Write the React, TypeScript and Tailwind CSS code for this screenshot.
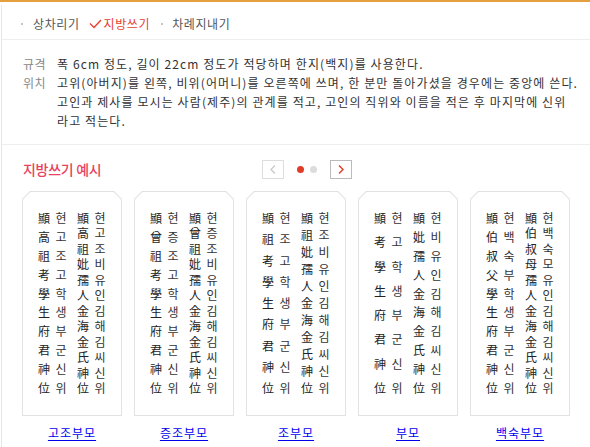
import React from 'react';

type Pair = { hanja: string; hangul: string };

type Jibang = {
  name: string;
  father: Pair;
  mother: Pair;
};

// Each tablet: left column is the father's line, right is the mother's.
const JIBANG: Jibang[] = [
  {
    name: '고조부모',
    father: { hanja: '顯高祖考學生府君神位', hangul: '현고조고학생부군신위' },
    mother: { hanja: '顯高祖妣孺人金海金氏神位', hangul: '현고조비유인김해김씨신위' },
  },
  {
    name: '증조부모',
    father: { hanja: '顯曾祖考學生府君神位', hangul: '현증조고학생부군신위' },
    mother: { hanja: '顯曾祖妣孺人金海金氏神位', hangul: '현증조비유인김해김씨신위' },
  },
  {
    name: '조부모',
    father: { hanja: '顯祖考學生府君神位', hangul: '현조고학생부군신위' },
    mother: { hanja: '顯祖妣孺人金海金氏神位', hangul: '현조비유인김해김씨신위' },
  },
  {
    name: '부모',
    father: { hanja: '顯考學生府君神位', hangul: '현고학생부군신위' },
    mother: { hanja: '顯妣孺人金海金氏神位', hangul: '현비유인김해김씨신위' },
  },
  {
    name: '백숙부모',
    father: { hanja: '顯伯叔父學生府君神位', hangul: '현백숙부학생부군신위' },
    mother: { hanja: '顯伯叔母孺人金海金氏神位', hangul: '현백숙모유인김해김씨신위' },
  },
];

const Column: React.FC<{ pair: Pair }> = ({ pair }) => {
  const hanja = Array.from(pair.hanja);
  const hangul = Array.from(pair.hangul);
  return (
    <div className="flex h-[182px] flex-col justify-between">
      {hanja.map((ch, i) => (
        <div key={i} className="flex h-[12px] gap-[5px] text-[12px] leading-[12px]">
          <span className="w-[12px] text-center text-[#222]">{ch}</span>
          <span className="w-[12px] text-center text-[#333]">{hangul[i]}</span>
        </div>
      ))}
    </div>
  );
};

const Tablet: React.FC<{ item: Jibang }> = ({ item }) => (
  <div className="flex w-[100px] flex-col items-center">
    <div className="h-[225px] w-full bg-[#e2e2e2] p-px [clip-path:polygon(8px_0,calc(100%-8px)_0,100%_8px,100%_100%,0_100%,0_8px)]">
      <div className="flex h-full w-full justify-center gap-[10px] bg-white pt-[20px] [clip-path:polygon(7.5px_0,calc(100%-7.5px)_0,100%_7.5px,100%_100%,0_100%,0_7.5px)]">
        <Column pair={item.father} />
        <Column pair={item.mother} />
      </div>
    </div>
    <a className="mt-[9px] text-[12px] leading-[16px] tracking-[1px] text-[#0000ee] underline underline-offset-2">{item.name}</a>
  </div>
);

const Bullet = () => <span className="block h-[2px] w-[2px] bg-[#c8c8c8]" />;

export default function App() {
  return (
    <div className="h-[447px] w-[590px] overflow-hidden bg-white font-['Noto_Sans_CJK_KR',sans-serif] text-[#333]">
      <div className="h-[2px] bg-[#e3a03c]" />
      <div className="mt-[3px] ml-px h-full border-l border-[#e6e6e6]">
        {/* tab menu */}
        <div className="flex h-[35px] items-center border-b border-[#eeeeee] pt-[3px] pl-[19px] text-[12px] tracking-[0.6px] text-[#555]">
          <Bullet />
          <span className="ml-[10px]">상차리기</span>
          <span className="ml-[9px] flex items-center text-[#e6412f]">
            <svg width="13" height="10" viewBox="0 0 13 10" fill="none" stroke="currentColor" strokeWidth="1.4">
              <polyline points="1,4.5 5,8.5 12,1" />
            </svg>
            <span className="ml-[2px]">지방쓰기</span>
          </span>
          <span className="ml-[11px]"><Bullet /></span>
          <span className="ml-[9px]">차례지내기</span>
        </div>

        {/* spec text */}
        <div className="border-b border-[#eeeeee] px-[21px] pt-[14px] pb-[14px] text-[12px] leading-[19px] tracking-[1.1px]">
          <div className="flex">
            <span className="w-[34px] shrink-0 tracking-[0.5px] text-[#888]">규격</span>
            <span>폭 6cm 정도, 길이 22cm 정도가 적당하며 한지(백지)를 사용한다.</span>
          </div>
          <div className="flex">
            <span className="w-[34px] shrink-0 tracking-[0.5px] text-[#888]">위치</span>
            <span className="whitespace-nowrap">
              고위(아버지)를 왼쪽, 비위(어머니)를 오른쪽에 쓰며, 한 분만 돌아가셨을 경우에는 중앙에 쓴다.
              <br />
              고인과 제사를 모시는 사람(제주)의 관계를 적고, 고인의 직위와 이름을 적은 후 마지막에 신위
              <br />
              라고 적는다.
            </span>
          </div>
        </div>

        {/* examples header with pager */}
        <div className="mt-[15px] grid grid-cols-[1fr_auto_1fr] items-center pl-[21px]">
          <h2 className="text-[14px] leading-[19px] font-medium tracking-[-0.3px] text-[#e8435e]">지방쓰기 예시</h2>
          <div className="flex items-center">
            <button className="flex h-[19px] w-[22px] items-center justify-center border border-[#dddddd] text-[#c8c8c8]">
              <svg width="6" height="9" viewBox="0 0 6 9" fill="none" stroke="currentColor" strokeWidth="1.2">
                <polyline points="5,0.5 1,4.5 5,8.5" />
              </svg>
            </button>
            <span className="ml-[13px] h-[7px] w-[7px] rounded-full bg-[#e03c28]" />
            <span className="ml-[6px] h-[7px] w-[7px] rounded-full bg-[#dcdcdc]" />
            <button className="ml-[13px] flex h-[19px] w-[22px] items-center justify-center border border-[#bbbbbb] text-[#e03c28]">
              <svg width="6" height="9" viewBox="0 0 6 9" fill="none" stroke="currentColor" strokeWidth="1.4">
                <polyline points="1,0.5 5,4.5 1,8.5" />
              </svg>
            </button>
          </div>
          <div />
        </div>

        {/* tablets */}
        <div className="mt-[12px] flex gap-[12px] pl-[20px]">
          {JIBANG.map((item) => (
            <Tablet key={item.name} item={item} />
          ))}
        </div>
      </div>
    </div>
  );
}
